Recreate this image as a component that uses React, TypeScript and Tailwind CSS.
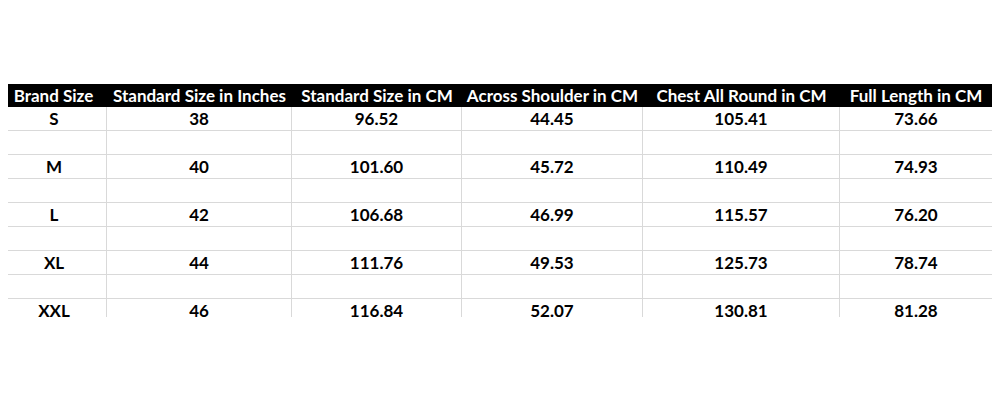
import React from "react";

const headers = [
  "Brand Size",
  "Standard Size in Inches",
  "Standard Size in CM",
  "Across Shoulder in CM",
  "Chest All Round in CM",
  "Full Length in CM",
];

const rows: (string[] | null)[] = [
  ["S", "38", "96.52", "44.45", "105.41", "73.66"],
  null,
  ["M", "40", "101.60", "45.72", "110.49", "74.93"],
  null,
  ["L", "42", "106.68", "46.99", "115.57", "76.20"],
  null,
  ["XL", "44", "111.76", "49.53", "125.73", "78.74"],
  null,
  ["XXL", "46", "116.84", "52.07", "130.81", "81.28"],
];

const cols = "grid grid-cols-[99px_185px_170px_181px_197px_152px]";

export default function App() {
  return (
    <div
      className="w-[1000px] h-[400px] bg-white pt-[84px] pl-[8px]"
      style={{ fontFamily: "Lato, 'Open Sans', sans-serif" }}
    >
      <div className="w-[984px] h-[233px] overflow-hidden">
        <div className={`${cols} h-[23px] bg-black text-white font-bold text-[17px]`}>
          {headers.map((h, i) => (
            <div
              key={h}
              className={`flex items-center justify-center whitespace-nowrap leading-none ${i === 0 ? "pr-[8px]" : ""}`}
            >
              {h}
            </div>
          ))}
        </div>
        {rows.map((r, i) => (
          <div key={i} className={`${cols} h-[24px] border-b border-[#d9d9d9] text-black font-bold text-[17px]`}>
            {Array.from({ length: 6 }).map((_, j) => (
              <div
                key={j}
                className={`flex items-center justify-center leading-none ${j < 5 ? "border-r border-[#d9d9d9]" : ""} ${j === 0 ? "pr-[6px]" : ""}`}
              >
                {r ? r[j] : ""}
              </div>
            ))}
          </div>
        ))}
      </div>
    </div>
  );
}
